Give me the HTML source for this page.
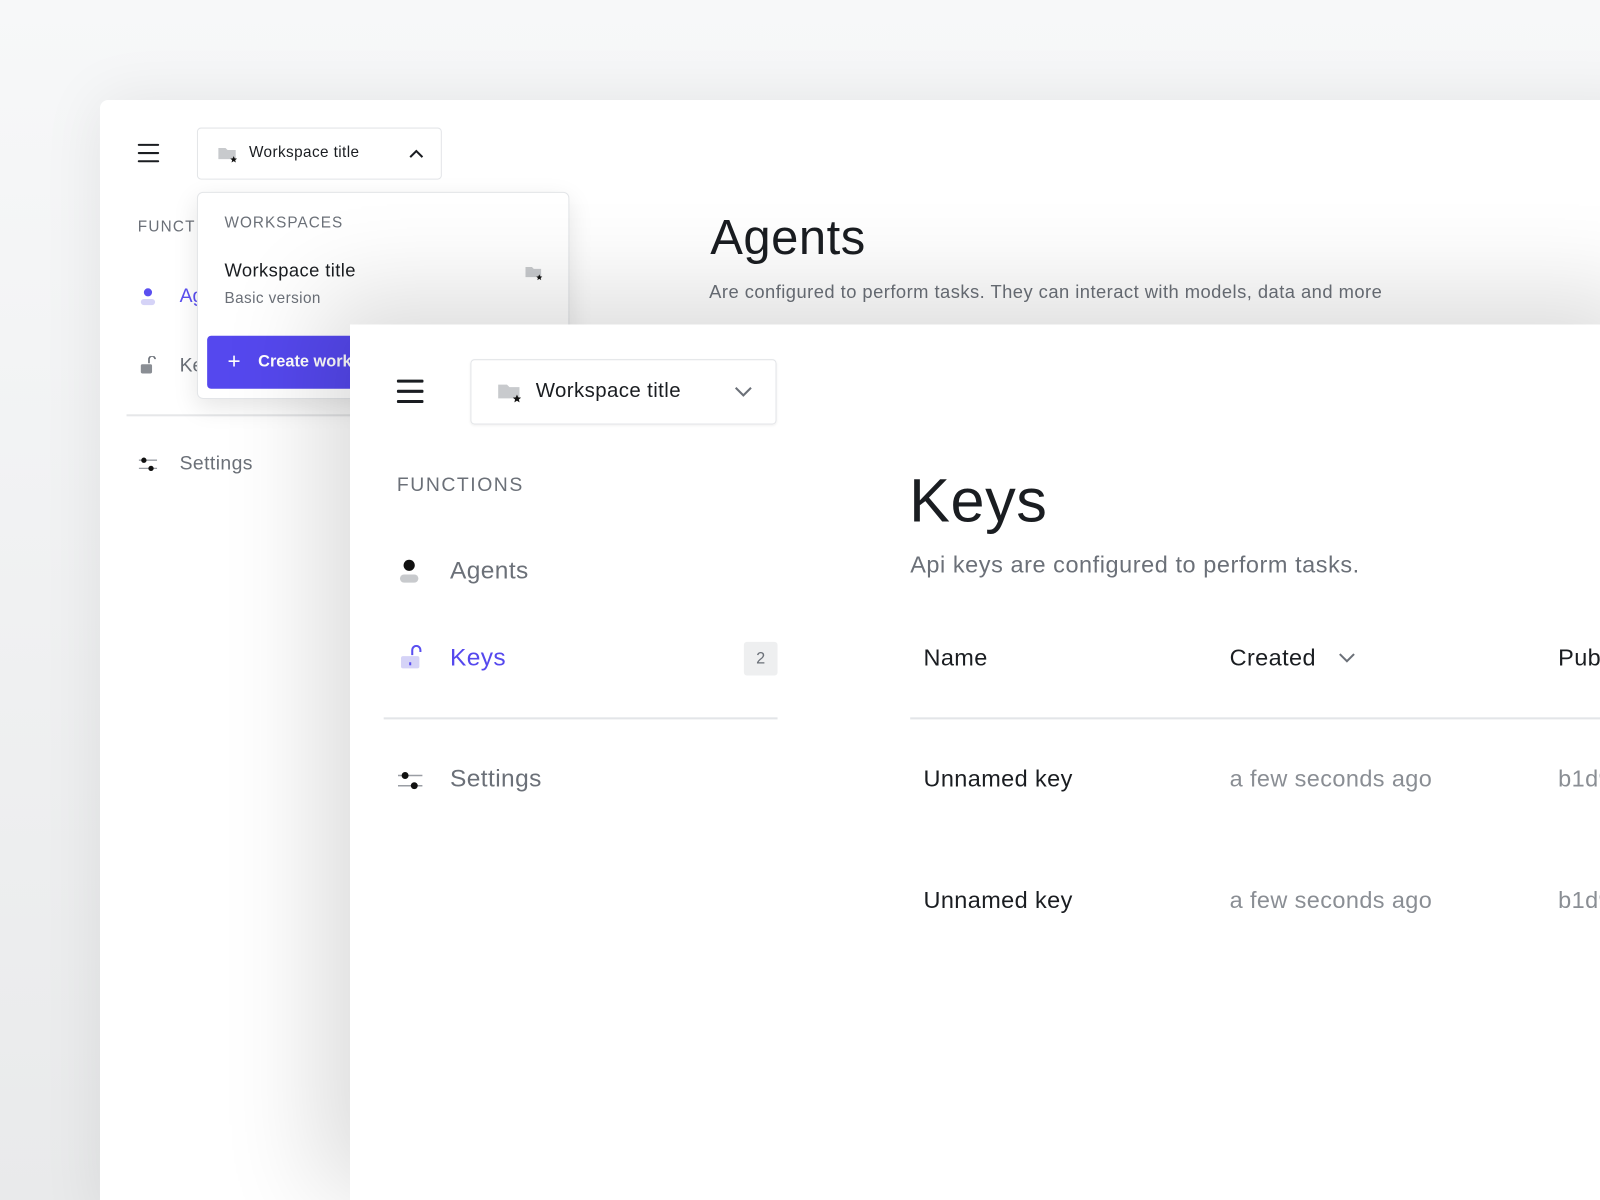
<!DOCTYPE html>
<html style="overflow:hidden;width:1600px;height:1200px;background:#eceded"><head><meta charset="utf-8"><style>
*{box-sizing:border-box;margin:0;padding:0}
body{width:1600px;height:1200px;overflow:hidden;position:relative;font-family:"Liberation Sans",sans-serif;background:linear-gradient(180deg,#f7f8f9 0%,#e9eaeb 100%)}
#wrap{position:absolute;left:0;top:0;width:1568px;height:1176px;overflow:hidden;transform:scale(1.0204);transform-origin:0 0}
.win{position:absolute;background:#fff}
#back{left:98px;top:98px;width:1520px;height:1100px;border-radius:8px 0 0 0;box-shadow:0 0 60px rgba(0,0,0,.08)}
#front{left:343px;top:318px;width:1300px;height:880px;box-shadow:-30px -30px 90px rgba(0,0,0,.14)}
.abs{position:absolute;white-space:nowrap}
.ham span{display:block;background:#1a1d21;border-radius:1px}
.ls{letter-spacing:.4px}
</style></head><body><div id="wrap">
<div class="win" id="back">
 <div class="abs ham" style="left:37px;top:43px;width:21px"><span style="height:2px;margin-bottom:6px"></span><span style="height:2px;margin-bottom:6px"></span><span style="height:2px"></span></div>
 <div class="abs" style="left:95px;top:27px;width:240px;height:51px;border:1px solid #e3e5e8;border-radius:4px">
  <svg class="abs" style="left:19px;top:16px" width="22" height="20" viewBox="0 0 22 20"><path d="M1 3h7l2 2h8v9H1z" fill="#c8cacd"/><path d="M16 11l1 2.2 2.3.2-1.8 1.5.6 2.3-2.1-1.3-2.1 1.3.6-2.3-1.8-1.5 2.3-.2z" fill="#111"/></svg>
  <div class="abs ls" style="left:50px;top:15px;font-size:15px;color:#1a1d21">Workspace title</div>
  <svg class="abs" style="left:207px;top:20px" width="14" height="9"><path d="M1 8l6-6 6 6" stroke="#1a1d21" stroke-width="2" fill="none"/></svg>
 </div>
 <div class="abs" style="left:37px;top:116px;font-size:15px;letter-spacing:1.2px;color:#6b7078">FUNCT</div>
 <svg class="abs" style="left:39px;top:184px" width="16" height="18"><circle cx="8" cy="4.5" r="4" fill="#5a4ff0"/><rect x="1" y="11" width="14" height="6" rx="3" fill="#d5d3f7"/></svg>
 <div class="abs" style="left:78px;top:182px;font-size:19px;color:#5a4ff0">Ag</div>
 <svg class="abs" style="left:39px;top:251px" width="16" height="18"><path d="M9 7V3a3 3 0 0 1 6 0" stroke="#6b7078" stroke-width="1.6" fill="none"/><rect x="1" y="8" width="11" height="9" rx="1.5" fill="#8a8e94"/></svg>
 <div class="abs" style="left:78px;top:250px;font-size:19px;color:#6b7078">Ke</div>
 <div class="abs" style="left:26px;top:308px;width:300px;height:2px;background:#e6e7e9"></div>
 <svg class="abs" style="left:38px;top:349px" width="18" height="16"><path d="M0 4h18M0 12h18" stroke="#9a9ea4" stroke-width="1.3"/><circle cx="5" cy="4" r="2.6" fill="#111"/><circle cx="12" cy="12" r="2.6" fill="#111"/></svg>
 <div class="abs ls" style="left:78px;top:346px;font-size:19px;color:#6b7078">Settings</div>
 <div class="abs" style="left:598px;top:108px;font-size:48px;color:#1a1d21;font-weight:500;letter-spacing:.5px">Agents</div>
 <div class="abs" style="left:597px;top:178px;font-size:18px;color:#6b7078;letter-spacing:.45px">Are configured to perform tasks. They can interact with models, data and more</div>
 <div class="abs" style="left:95px;top:90px;width:365px;height:203px;background:#fff;border:1px solid #e3e5e8;border-radius:6px;box-shadow:0 8px 24px rgba(0,0,0,.1)">
  <div class="abs" style="left:26px;top:21px;font-size:15px;letter-spacing:1px;color:#6b7078">WORKSPACES</div>
  <div class="abs ls" style="left:26px;top:66px;font-size:18px;color:#1a1d21">Workspace title</div>
  <div class="abs ls" style="left:26px;top:95px;font-size:15px;color:#6b7078">Basic version</div>
  <svg class="abs" style="left:320px;top:70px" width="20" height="18" viewBox="0 0 22 20"><path d="M1 3h7l2 2h8v9H1z" fill="#c8cacd"/><path d="M16 11l1 2.2 2.3.2-1.8 1.5.6 2.3-2.1-1.3-2.1 1.3.6-2.3-1.8-1.5 2.3-.2z" fill="#111"/></svg>
  <div class="abs" style="left:9px;top:140px;width:340px;height:52px;background:#5548ee;border-radius:4px;color:#fff;font-size:16px;font-weight:bold">
   <div class="abs" style="left:20px;top:12px;font-size:22px;font-weight:normal">+</div>
   <div class="abs" style="left:50px;top:17px">Create workspace</div>
  </div>
 </div>
</div>
<div class="win" id="front">
 <div class="abs ham" style="left:46px;top:54px;width:26px"><span style="height:2.5px;margin-bottom:7.5px"></span><span style="height:2.5px;margin-bottom:7.5px"></span><span style="height:2.5px"></span></div>
 <div class="abs" style="left:118px;top:34px;width:300px;height:64px;border:1px solid #e3e5e8;border-radius:4px;box-shadow:0 1px 2px rgba(0,0,0,.05)">
  <svg class="abs" style="left:25px;top:20px" width="27" height="25" viewBox="0 0 22 20"><path d="M1 3h7l2 2h8v9H1z" fill="#c8cacd"/><path d="M16 11l1 2.2 2.3.2-1.8 1.5.6 2.3-2.1-1.3-2.1 1.3.6-2.3-1.8-1.5 2.3-.2z" fill="#111"/></svg>
  <div class="abs ls" style="left:63px;top:19px;font-size:20px;color:#1a1d21">Workspace title</div>
  <svg class="abs" style="left:258px;top:26px" width="17" height="11"><path d="M1 1l7.5 7.5L16 1" stroke="#6b7078" stroke-width="2" fill="none"/></svg>
 </div>
 <div class="abs" style="left:46px;top:147px;font-size:19px;letter-spacing:1.5px;color:#6b7078">FUNCTIONS</div>
 <svg class="abs" style="left:48px;top:230px" width="20" height="24"><circle cx="10" cy="6" r="5.5" fill="#111"/><rect x="1" y="15" width="18" height="8" rx="4" fill="#c8cacd"/></svg>
 <div class="abs ls" style="left:98px;top:228px;font-size:24px;color:#6b7078">Agents</div>
 <svg class="abs" style="left:49px;top:314px" width="22" height="24"><path d="M12 10V5a4 4 0 0 1 8 0v2" stroke="#5a4ff0" stroke-width="2" fill="none"/><rect x="1" y="11" width="18" height="12" rx="2" fill="#d5d3f7"/><rect x="9" y="17" width="2" height="3" fill="#5a4ff0"/></svg>
 <div class="abs ls" style="left:98px;top:313px;font-size:24px;color:#5548ee">Keys</div>
 <div class="abs" style="left:386px;top:311px;width:33px;height:33px;background:#eeeff0;border-radius:3px;font-size:16px;color:#6b7078;text-align:center;line-height:33px">2</div>
 <div class="abs" style="left:33px;top:385px;width:386px;height:2px;background:#e3e5e8"></div>
 <svg class="abs" style="left:47px;top:437px" width="24" height="20"><path d="M0 5h24M0 15h24" stroke="#9a9ea4" stroke-width="1.5"/><circle cx="7" cy="5" r="3.4" fill="#111"/><circle cx="16" cy="15" r="3.4" fill="#111"/></svg>
 <div class="abs ls" style="left:98px;top:432px;font-size:24px;color:#6b7078">Settings</div>
 <div class="abs" style="left:548px;top:138px;font-size:60px;color:#1a1d21;font-weight:500;letter-spacing:.5px">Keys</div>
 <div class="abs" style="left:549px;top:222px;font-size:23px;color:#6b7078;letter-spacing:.55px">Api keys are configured to perform tasks.</div>
 <div class="abs ls" style="left:562px;top:313px;font-size:23px;color:#1a1d21">Name</div>
 <div class="abs ls" style="left:862px;top:313px;font-size:23px;color:#1a1d21">Created</div>
 <svg class="abs" style="left:969px;top:322px" width="16" height="10"><path d="M1 1l7 7 7-7" stroke="#6b7078" stroke-width="2" fill="none"/></svg>
 <div class="abs ls" style="left:1184px;top:313px;font-size:23px;color:#1a1d21">Public key</div>
 <div class="abs" style="left:549px;top:385px;width:800px;height:2px;background:#e3e5e8"></div>
 <div class="abs ls" style="left:562px;top:432px;font-size:23px;color:#1a1d21">Unnamed key</div>
 <div class="abs ls" style="left:862px;top:432px;font-size:23px;color:#8a8e94">a few seconds ago</div>
 <div class="abs ls" style="left:1184px;top:432px;font-size:23px;color:#8a8e94">b1d9f0c2</div>
 <div class="abs ls" style="left:562px;top:551px;font-size:23px;color:#1a1d21">Unnamed key</div>
 <div class="abs ls" style="left:862px;top:551px;font-size:23px;color:#8a8e94">a few seconds ago</div>
 <div class="abs ls" style="left:1184px;top:551px;font-size:23px;color:#8a8e94">b1d9f0c2</div>
</div>
</div></body></html>
